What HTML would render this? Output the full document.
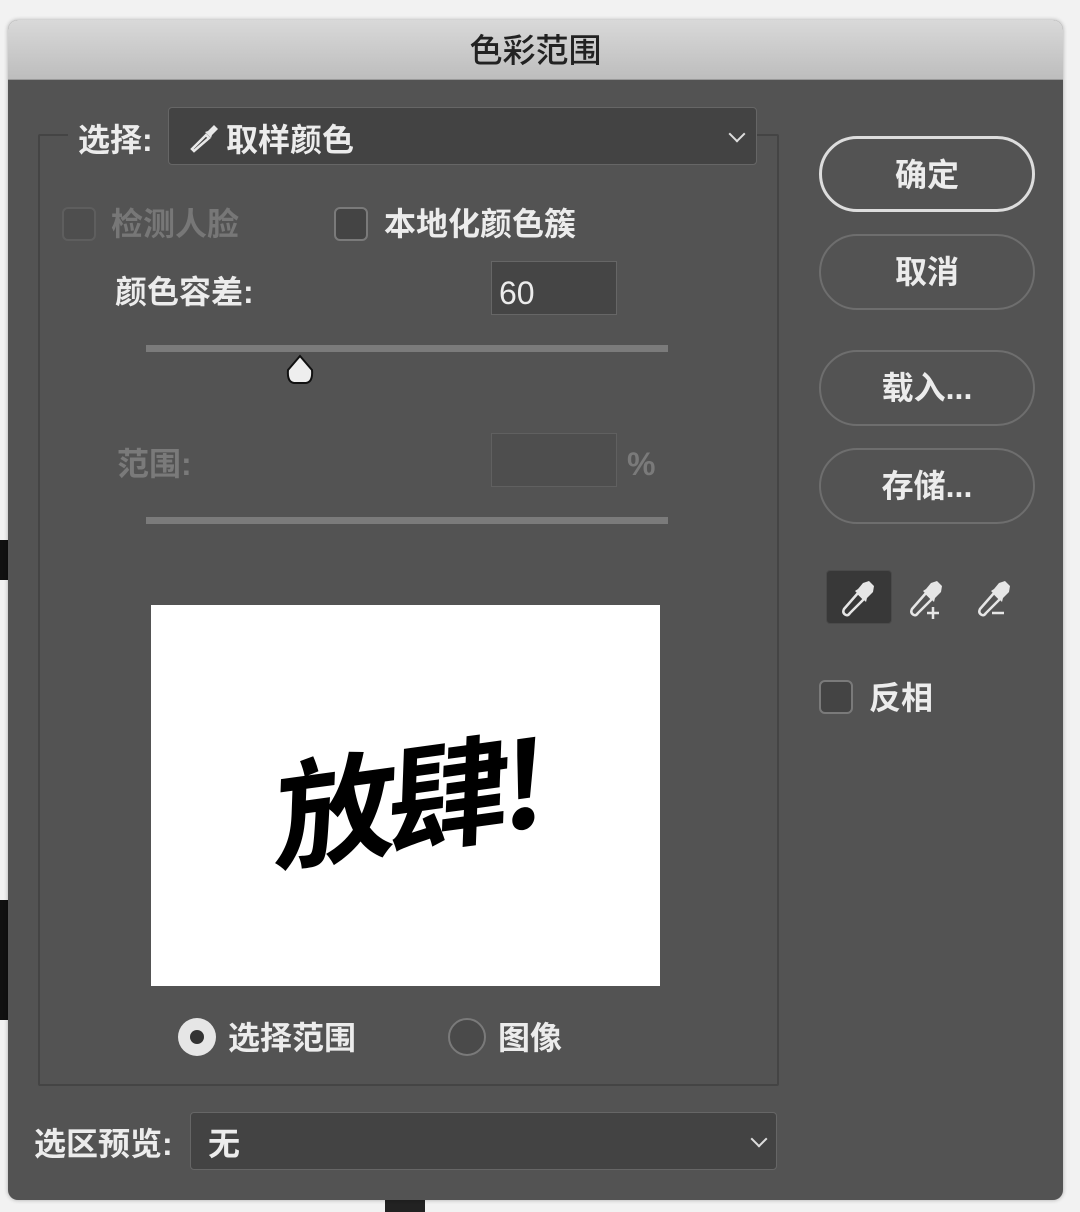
<!DOCTYPE html>
<html><head><meta charset="utf-8"><style>
*{margin:0;padding:0;box-sizing:border-box}
body{width:1080px;height:1212px;background:#f2f2f2;position:relative;overflow:hidden;font-family:"Liberation Sans","Noto Sans CJK SC",sans-serif;}
.a{position:absolute}
.t{color:#ececec;font-size:32px;line-height:1;white-space:nowrap;font-weight:700}
.dim{color:#7a7a7a}
.dlg{left:8px;top:20px;width:1055px;height:1180px;background:#535353;border-radius:10px;overflow:hidden;box-shadow:0 0 4px rgba(0,0,0,.3)}
.title{left:0;top:0;width:100%;height:60px;background:linear-gradient(#d9d9d9,#bdbdbd);border-bottom:1px solid #999;text-align:center;font-size:33px;color:#222;line-height:62px;font-weight:500}
.cb{width:34px;height:34px;border:2px solid #7a7a7a;border-radius:6px;background:#444}
.btn{width:216px;height:76px;border:2px solid #6e6e6e;border-radius:38px;text-align:center;line-height:72px;color:#ececec;font-size:32px;font-weight:700}
.drop{background:#434343;border:1px solid #666;border-radius:4px}
.chev{width:12px;height:12px;border-right:2.5px solid #ddd;border-bottom:2.5px solid #ddd;transform:rotate(45deg)}
</style></head><body>
<div class="a" style="left:0;top:540px;width:10px;height:40px;background:#111"></div>
<div class="a" style="left:0;top:900px;width:12px;height:120px;background:#111"></div>
<div class="a" style="left:385px;top:1196px;width:40px;height:16px;background:#222"></div>
<div class="a dlg">
 <div class="a title">色彩范围</div>
 <div class="a" style="left:30px;top:114px;width:741px;height:952px;border:2px solid #444;border-radius:2px"></div>
 <div class="a" style="left:60px;top:96px;width:100px;height:40px;background:#535353"></div>
 <div class="a t" style="left:70px;top:104px">选择:</div>
 <div class="a drop" style="left:160px;top:87px;width:589px;height:58px"></div>
 <svg class="a" style="left:180px;top:101px" width="34" height="34" viewBox="0 0 34 34"><path d="M6 30 L4 28 L18 14 L21 17 Z" fill="none" stroke="#e8e8e8" stroke-width="2.5"/><path d="M17 11 L23 17 L24 14 L30 8 L26 4 L20 10 Z" fill="#e8e8e8"/></svg>
 <div class="a t" style="left:218px;top:104px">取样颜色</div>
 <div class="a chev" style="left:723px;top:108px"></div>
 <div class="a cb" style="left:54px;top:187px;border-color:#5e5e5e;background:#4e4e4e"></div>
 <div class="a t dim" style="left:103px;top:188px;color:#777">检测人脸</div>
 <div class="a cb" style="left:326px;top:187px"></div>
 <div class="a t" style="left:376px;top:188px">本地化颜色簇</div>
 <div class="a t" style="left:107px;top:256px">颜色容差:</div>
 <div class="a" style="left:483px;top:241px;width:126px;height:54px;background:#454545;border:1px solid #666"></div>
 <div class="a t" style="left:491px;top:257px;font-weight:500">60</div>
 <div class="a" style="left:138px;top:325px;width:522px;height:7px;background:#7b7b7b"></div>
 <svg class="a" style="left:276px;top:334px" width="32" height="32" viewBox="0 0 32 32"><path d="M16 2 L28 16 Q29 28 22 29 L10 29 Q3 28 4 16 Z" fill="#eee" stroke="#111" stroke-width="2"/></svg>
 <div class="a t" style="left:109px;top:428px;color:#7a7a7a">范围:</div>
 <div class="a" style="left:483px;top:413px;width:126px;height:54px;background:#4e4e4e;border:1px solid #606060"></div>
 <div class="a t" style="left:619px;top:428px;color:#7a7a7a">%</div>
 <div class="a" style="left:138px;top:497px;width:522px;height:7px;background:#7b7b7b"></div>
 <div class="a" style="left:143px;top:585px;width:509px;height:381px;background:#fff;overflow:hidden">
  <div class="a" style="left:126px;top:128px;font-size:120px;line-height:1;font-weight:700;color:#000;transform:skew(-10deg) rotate(-8deg);font-family:'Noto Sans CJK SC',sans-serif;letter-spacing:-8px">放肆!</div>
 </div>
 <div class="a" style="left:170px;top:998px;width:38px;height:38px;border-radius:50%;background:#e6e6e6"><div class="a" style="left:12px;top:12px;width:14px;height:14px;border-radius:50%;background:#333"></div></div>
 <div class="a t" style="left:220px;top:1002px">选择范围</div>
 <div class="a" style="left:440px;top:998px;width:38px;height:38px;border-radius:50%;border:2px solid #7a7a7a;background:#4a4a4a"></div>
 <div class="a t" style="left:490px;top:1002px">图像</div>
 <div class="a t" style="left:26px;top:1108px">选区预览:</div>
 <div class="a drop" style="left:182px;top:1092px;width:587px;height:58px"></div>
 <div class="a t" style="left:200px;top:1108px">无</div>
 <div class="a chev" style="left:745px;top:1113px"></div>
 <div class="a btn" style="left:811px;top:116px;border-color:#ddd;border-width:3px">确定</div>
 <div class="a btn" style="left:811px;top:214px">取消</div>
 <div class="a btn" style="left:811px;top:330px">载入...</div>
 <div class="a btn" style="left:811px;top:428px">存储...</div>
 <div class="a" style="left:818px;top:550px;width:66px;height:54px;background:#383838;border:1px solid #4a4a4a;border-radius:4px"></div>
 <svg class="a" style="left:830px;top:553px" width="44" height="48" viewBox="0 0 44 48"><path d="M8 42 Q4 40 6 36 L20 20 L26 26 L12 40 Q10 43 8 42Z" fill="none" stroke="#e6e6e6" stroke-width="2.5"/><path d="M17 18 L28 29 L29 25 L35 19 L36 13 L31 8 L25 10 L20 16Z" fill="#e6e6e6"/></svg>
 <svg class="a" style="left:898px;top:553px" width="44" height="48" viewBox="0 0 44 48"><path d="M8 42 Q4 40 6 36 L20 20 L26 26 L12 40 Q10 43 8 42Z" fill="none" stroke="#e6e6e6" stroke-width="2.5"/><path d="M17 18 L28 29 L29 25 L35 19 L36 13 L31 8 L25 10 L20 16Z" fill="#e6e6e6"/><path d="M27 34v12M21 40h12" stroke="#e6e6e6" stroke-width="2.5"/></svg>
 <svg class="a" style="left:966px;top:553px" width="44" height="48" viewBox="0 0 44 48"><path d="M8 42 Q4 40 6 36 L20 20 L26 26 L12 40 Q10 43 8 42Z" fill="none" stroke="#e6e6e6" stroke-width="2.5"/><path d="M17 18 L28 29 L29 25 L35 19 L36 13 L31 8 L25 10 L20 16Z" fill="#e6e6e6"/><path d="M18 40h12" stroke="#e6e6e6" stroke-width="2.5"/></svg>
 <div class="a cb" style="left:811px;top:660px"></div>
 <div class="a t" style="left:861px;top:662px">反相</div>
</div>
</body></html>
